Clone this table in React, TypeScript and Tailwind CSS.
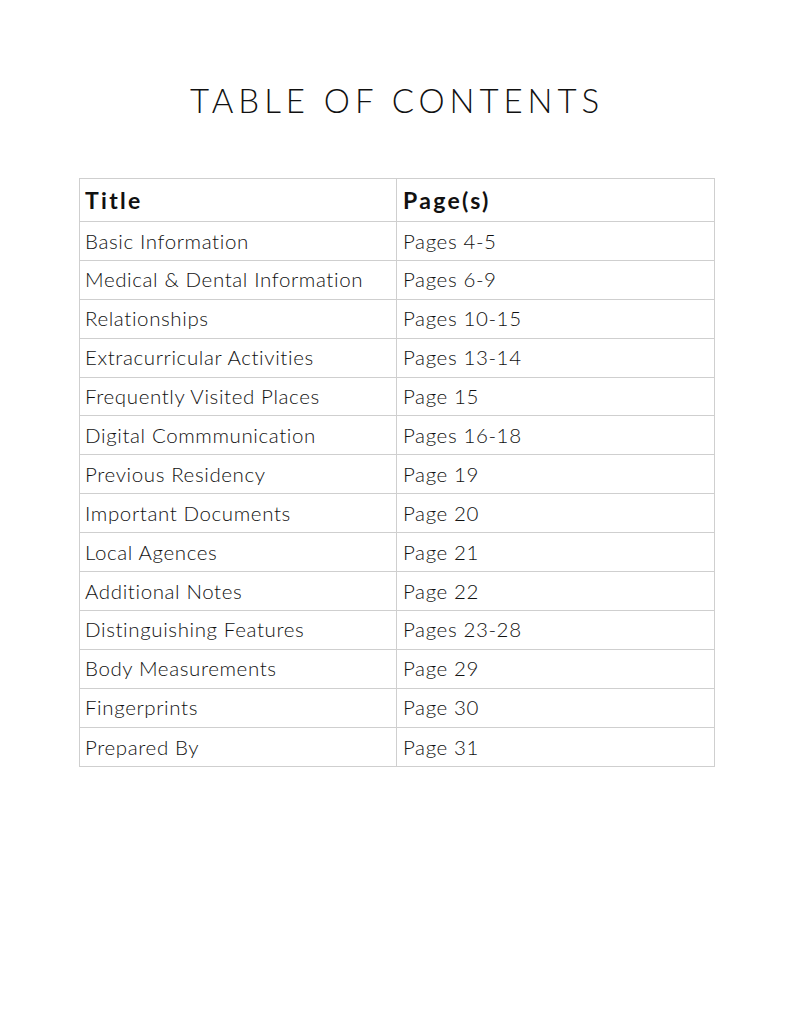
const rows: [string, string][] = [
  ['Basic Information', 'Pages 4-5'],
  ['Medical & Dental Information', 'Pages 6-9'],
  ['Relationships', 'Pages 10-15'],
  ['Extracurricular Activities', 'Pages 13-14'],
  ['Frequently Visited Places', 'Page 15'],
  ['Digital Commmunication', 'Pages 16-18'],
  ['Previous Residency', 'Page 19'],
  ['Important Documents', 'Page 20'],
  ['Local Agences', 'Page 21'],
  ['Additional Notes', 'Page 22'],
  ['Distinguishing Features', 'Pages 23-28'],
  ['Body Measurements', 'Page 29'],
  ['Fingerprints', 'Page 30'],
  ['Prepared By', 'Page 31'],
];

const App = () => {
  return (
    <div className="min-h-[1027px] w-[794px] bg-white font-['Lato',sans-serif] text-[#111]">
      <h1 className="pt-[79px] text-center text-[33px] font-light leading-[42px] tracking-[0.15em]">
        TABLE OF CONTENTS
      </h1>
      <div className="mx-[79px] mt-[57px] w-[636px] border border-[#cfcfcf]">
        <div className="grid h-[43px] grid-cols-[317px_1fr] border-b border-[#cfcfcf] text-[23px] font-bold tracking-[0.1em]">
          <div className="flex items-center border-r border-[#cfcfcf] pl-[5px]">Title</div>
          <div className="flex items-center pl-[6px]">Page(s)</div>
        </div>
        {rows.map(([title, page], i) => (
          <div
            key={title}
            className={`grid h-[38.9px] grid-cols-[317px_1fr] text-[20.5px] font-light tracking-[0.03em] ${
              i < rows.length - 1 ? 'border-b border-[#cfcfcf]' : ''
            }`}
          >
            <div className="flex items-center border-r border-[#cfcfcf] pl-[5px]">{title}</div>
            <div className="flex items-center pl-[6px]">{page}</div>
          </div>
        ))}
      </div>
    </div>
  );
};

export default App;
